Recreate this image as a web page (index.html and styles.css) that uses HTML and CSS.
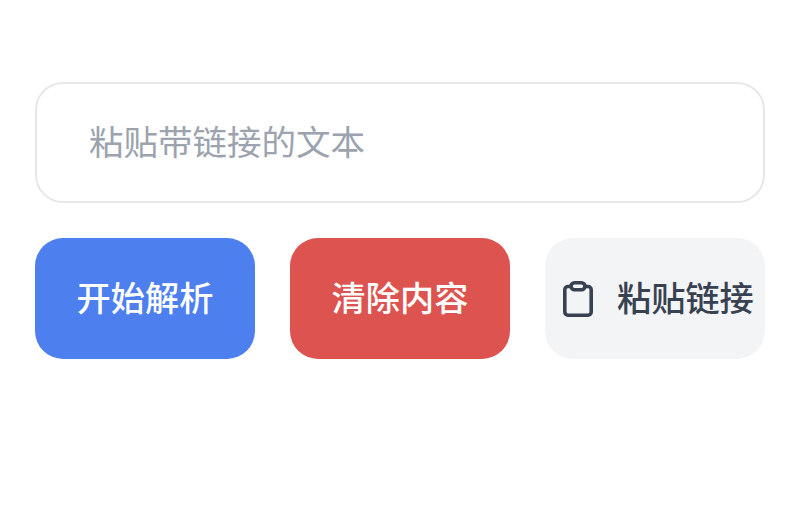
FILE: index.html
```html
<!DOCTYPE html>
<html lang="zh-CN">
<head>
<meta charset="utf-8">
<title>粘贴链接</title>
<link rel="stylesheet" href="styles.css">
</head>
<body>
<main class="panel">
  <div class="field"><span class="placeholder">粘贴带链接的文本</span></div>
  <div class="actions">
    <button class="btn btn-primary"><span class="label">开始解析</span></button>
    <button class="btn btn-danger"><span class="label">清除内容</span></button>
    <button class="btn btn-light">
      <svg class="icon" viewBox="0 0 30 36" fill="none" stroke="#374151" stroke-width="3.600" stroke-linecap="round" stroke-linejoin="round"><path d="M8 5.500H5A3.200 3.200 0 0 0 1.800 8.700V31A3.200 3.200 0 0 0 5 34.200H25A3.200 3.200 0 0 0 28.200 31V8.700A3.200 3.200 0 0 0 25 5.500H22"/><rect x="8" y="1.800" width="14" height="7" rx="3.500"/></svg>
      <span class="label">粘贴链接</span>
    </button>
  </div>
</main>
</body>
</html>
```
FILE: styles.css
```css
* { box-sizing: border-box; }
html, body { margin: 0; background: #fff; }
body { width: 800px; height: 515px; font-family: "Noto Sans CJK SC", "Noto Sans", sans-serif; }
.panel { padding: 82px 35px 0; display: flex; flex-direction: column; gap: 35px; }
.field { height: 121px; border: 2px solid #e5e7eb; border-radius: 28px; padding: 0 52px 5px; display: flex; align-items: center; background: #fff; }
.placeholder { font-size: 34.5px; line-height: 1; color: #9ca3af; }
.actions { display: flex; justify-content: space-between; }
.btn { width: 220px; height: 121px; border: 0; border-radius: 28px; font: inherit; font-size: 34.2px; display: flex; align-items: center; justify-content: center; padding: 0 0 4px; }
.label { line-height: 1; font-weight: 500; }
.btn-primary { background: #4d80ee; color: #fff; }
.btn-danger { background: #dd5350; color: #fff; }
.btn-light { background: #f3f4f6; color: #374151; gap: 24px; justify-content: flex-start; padding-left: 18px; }
.icon { width: 30px; height: 36px; flex: none; margin-top: 4px; }
```
